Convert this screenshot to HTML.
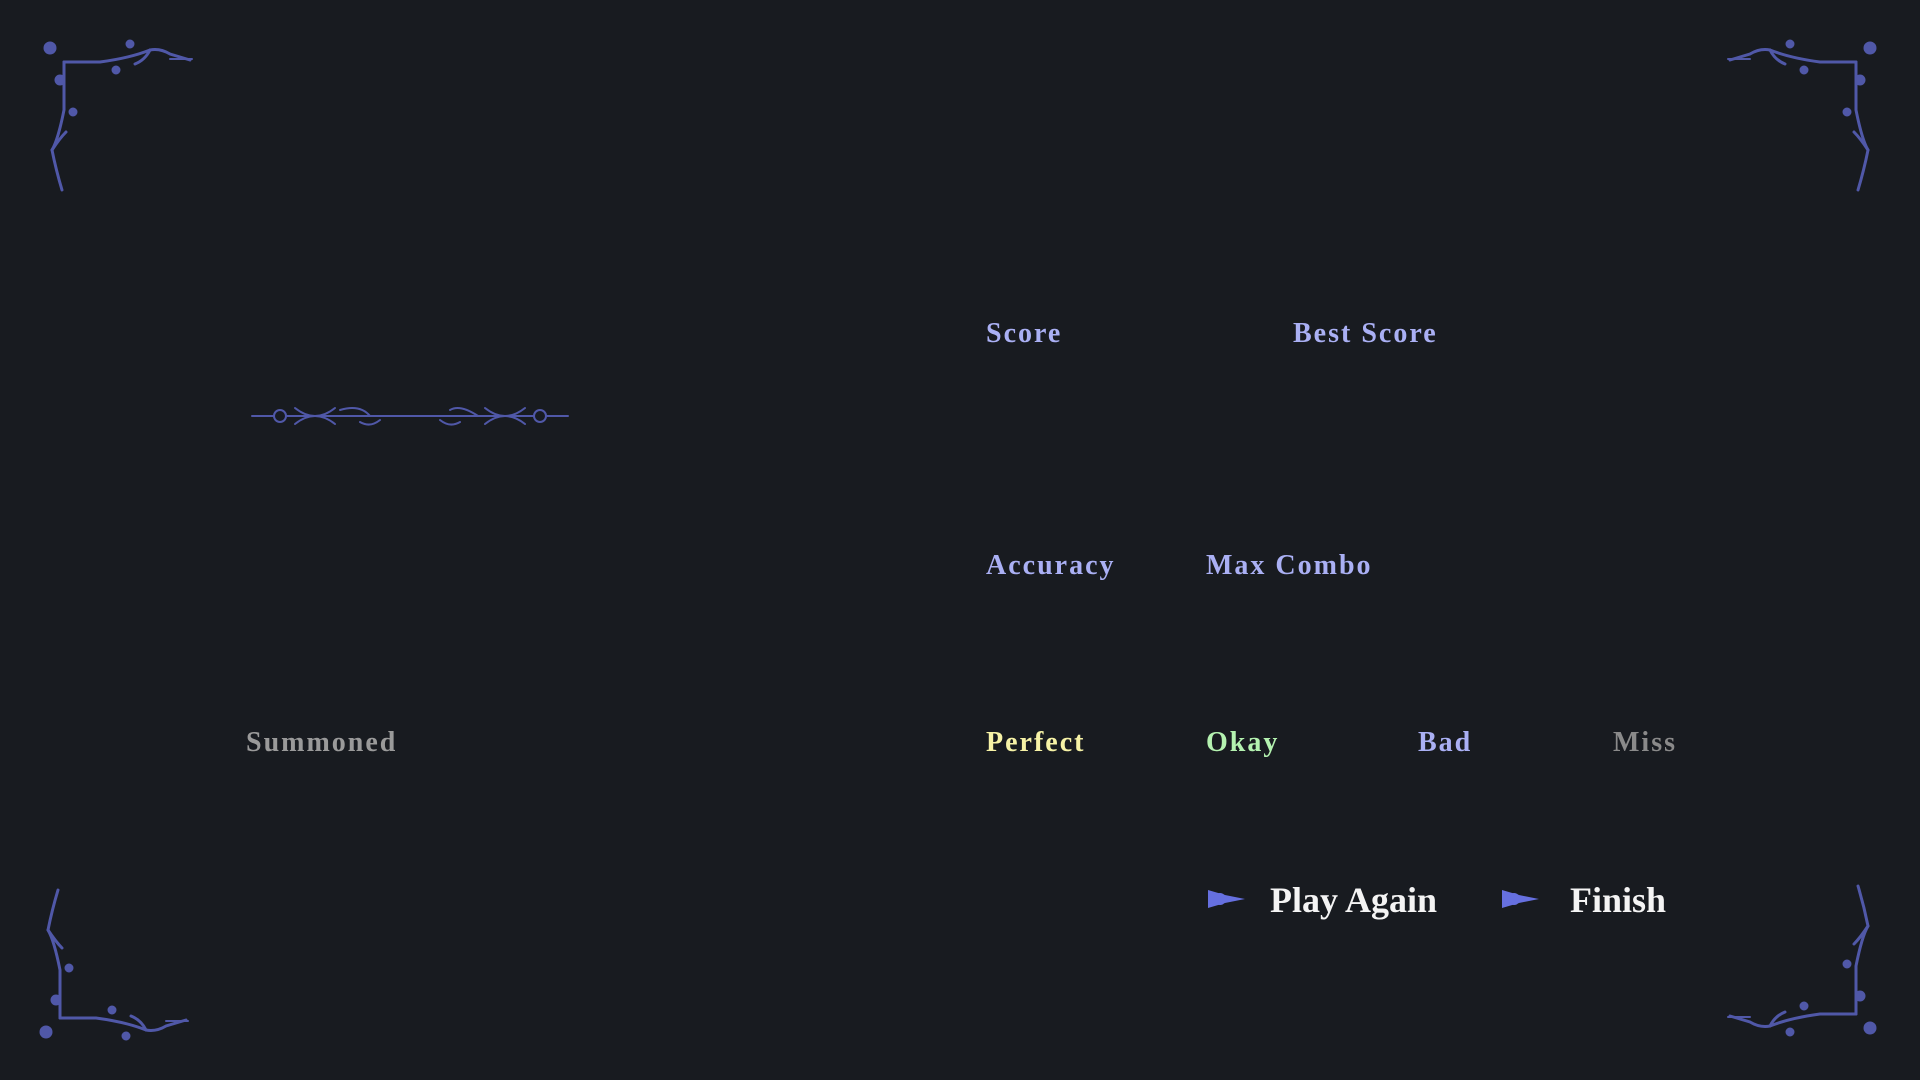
<!DOCTYPE html>
<html><head><meta charset="utf-8"><style>
html,body{margin:0;padding:0;background:#181b20;width:1920px;height:1080px;overflow:hidden;font-family:"Liberation Serif",serif;}
.t{position:absolute;font-weight:bold;font-size:28px;line-height:1;white-space:nowrap;letter-spacing:2px}
.l{color:#aab0f4}
.b{position:absolute;font-family:"Liberation Serif",serif;font-weight:bold;font-size:36px;color:#f4f4f4;line-height:1}
svg{position:absolute}
</style></head><body>
<svg width="1920" height="1080" style="left:0;top:0" fill="none" stroke="#5058a8" stroke-width="3" stroke-linecap="round">
<g id="c">
<path d="M64 62 L64 110 Q58 140 52 150 Q56 170 62 190"/>
<path d="M64 62 L100 62 Q130 58 150 50 Q160 48 170 54 L190 60"/>
<path d="M150 50 Q145 60 135 64"/>
<path d="M52 150 Q60 138 66 132"/>
<circle cx="50" cy="48" r="5" fill="#5058a8"/>
<circle cx="60" cy="80" r="4" fill="#5058a8"/>
<circle cx="116" cy="70" r="3" fill="#5058a8"/>
<circle cx="130" cy="44" r="3" fill="#5058a8"/>
<circle cx="73" cy="112" r="3" fill="#5058a8"/>
<path d="M170 59 L192 59" stroke-width="2"/>
</g>
<use href="#c" transform="translate(1920,0) scale(-1,1)"/>
<use href="#c" transform="translate(-4,1080) scale(1,-1)"/>
<use href="#c" transform="translate(1920,1076) scale(-1,-1)"/>
<g stroke-width="2">
<path d="M252 416 L568 416"/>
<circle cx="280" cy="416" r="6" fill="#181b20"/><circle cx="540" cy="416" r="6" fill="#181b20"/>
<path d="M295 408 Q315 424 335 408 M295 424 Q315 408 335 424"/>
<path d="M485 408 Q505 424 525 408 M485 424 Q505 408 525 424"/>
<path d="M340 410 Q360 404 370 416 M450 410 Q460 404 478 416"/>
<path d="M360 422 Q370 428 380 420 M440 420 Q450 428 460 422"/>
</g>
<g fill="#6670e0" stroke="none">
<path d="M1208 890 L1225 895 L1245 899 L1225 903 L1208 908 Z"/>
<circle cx="1220" cy="899" r="6"/>
<path d="M1502 890 L1519 895 L1539 899 L1519 903 L1502 908 Z"/>
<circle cx="1514" cy="899" r="6"/>
</g>
</svg>
<div class="t l" style="left:986px;top:320px">Score</div>
<div class="t l" style="left:1293px;top:320px">Best Score</div>
<div class="t l" style="left:986px;top:552px">Accuracy</div>
<div class="t l" style="left:1206px;top:552px">Max Combo</div>
<div class="t" style="left:246px;top:729px;color:#9a9a9a">Summoned</div>
<div class="t" style="left:986px;top:729px;color:#f6f2a6">Perfect</div>
<div class="t" style="left:1206px;top:729px;color:#b4f2b0">Okay</div>
<div class="t l" style="left:1418px;top:729px">Bad</div>
<div class="t" style="left:1613px;top:729px;color:#8a8a8a">Miss</div>
<div class="b" style="left:1270px;top:882px">Play Again</div>
<div class="b" style="left:1570px;top:882px">Finish</div>
</body></html>
